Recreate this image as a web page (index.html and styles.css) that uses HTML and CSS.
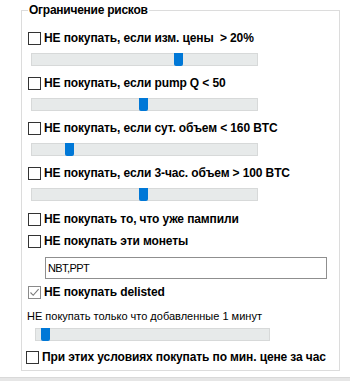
FILE: index.html
```html
<!DOCTYPE html>
<html lang="ru">
<head>
  <meta charset="UTF-8" />
  <title>Ограничение рисков</title>
  <link rel="stylesheet" href="styles.css">
</head>
<body>
  <div class="page">
    <fieldset class="group">
      <legend>Ограничение рисков</legend>

      <div class="check first"><span class="box"></span><span class="label">НЕ покупать, если изм. цены&nbsp; &gt; 20%</span></div>
      <div class="slider"><span class="thumb" style="left: 142px"></span></div>

      <div class="check"><span class="box"></span><span class="label">НЕ покупать, если pump Q &lt; 50</span></div>
      <div class="slider"><span class="thumb" style="left: 107px"></span></div>

      <div class="check"><span class="box"></span><span class="label">НЕ покупать, если сут. объем &lt; 160 BTC</span></div>
      <div class="slider"><span class="thumb" style="left: 33px"></span></div>

      <div class="check"><span class="box"></span><span class="label">НЕ покупать, если 3-час. объем &gt; 100 BTC</span></div>
      <div class="slider"><span class="thumb" style="left: 107px"></span></div>

      <div class="check plain"><span class="box"></span><span class="label">НЕ покупать то, что уже пампили</span></div>
      <div class="check tight"><span class="box"></span><span class="label">НЕ покупать эти монеты</span></div>
      <div class="coins">NBT,PPT</div>

      <div class="check checked"><span class="box">
        <svg width="11" height="11" viewBox="0 0 11 11"><path d="M1.5 5.5 L4.2 8.3 L9.6 2.2" fill="none" stroke="#7a7a7a" stroke-width="1.1"/></svg>
      </span><span class="label">НЕ покупать delisted</span></div>

      <div class="note">НЕ покупать только что добавленные 1 минут</div>
      <div class="slider wide"><span class="thumb" style="left: 5px"></span></div>

      <div class="check last"><span class="box"></span><span class="label">При этих условиях покупать по мин. цене за час</span></div>
    </fieldset>
  </div>
  <div class="statusbar"></div>
</body>
</html>
```

FILE: styles.css
```css
body {
  margin: 0;
  background: #fff;
  font-family: "Liberation Sans", Arial, sans-serif;
  color: #000;
  height: 381px;
  overflow: hidden;
}
.page {
  height: 377px;
  padding-top: 3px;
  box-sizing: border-box;
}
.group {
  margin: 0 0 0 21px;
  padding: 0;
  width: 319px;
  height: 368px;
  box-sizing: border-box;
  border: 1px solid #dcdcdc;
  min-width: 0;
}
.group legend {
  margin-left: 6px;
  padding: 0 1px;
  font-size: 12px;
  font-weight: bold;
  line-height: 14px;
  letter-spacing: -0.25px;
}

/* checkbox rows */
.check {
  display: flex;
  align-items: center;
  height: 13px;
  margin: 11px 0 0 6px;
  font-size: 12px;
  font-weight: bold;
  line-height: 13px;
  letter-spacing: -0.12px;
}
.check.first { margin-top: 15px; }
.check.plain { margin-top: 12px; }
.check.tight { margin-top: 9px; }
.check.checked { margin-top: 7px; }
.check.last { margin-top: 10px; margin-left: 4px; }
.box {
  width: 13px;
  height: 13px;
  box-sizing: border-box;
  border: 1px solid #333;
  background: #fff;
  display: flex;
  align-items: center;
  justify-content: center;
  flex: none;
}
.checked .box { border-color: #8a8a8a; }
.label {
  margin-left: 3px;
  white-space: nowrap;
}

/* track bars */
.slider {
  position: relative;
  width: 227px;
  height: 13px;
  margin: 8px 0 0 9px;
  box-sizing: border-box;
  background: #e7eaea;
  border: 1px solid #d7d9d9;
}
.slider.wide {
  width: 235px;
  margin: 5px 0 0 13px;
}
.thumb {
  position: absolute;
  top: -1px;
  width: 9px;
  height: 13px;
  background: #0078d7;
  border-radius: 0 0 2px 2px;
}

.coins {
  margin: 9px 0 0 23px;
  width: 282px;
  height: 22px;
  box-sizing: border-box;
  border: 1px solid #8f8f8f;
  padding: 0 0 0 2px;
  font-size: 11px;
  letter-spacing: -0.6px;
  line-height: 20px;
}
.note {
  margin: 10px 0 0 5px;
  font-size: 11px;
  line-height: 14px;
  white-space: nowrap;
}

.statusbar {
  height: 4px;
  background: #e6e6e6;
  border-top: 1px solid #d9d9d9;
}
```
